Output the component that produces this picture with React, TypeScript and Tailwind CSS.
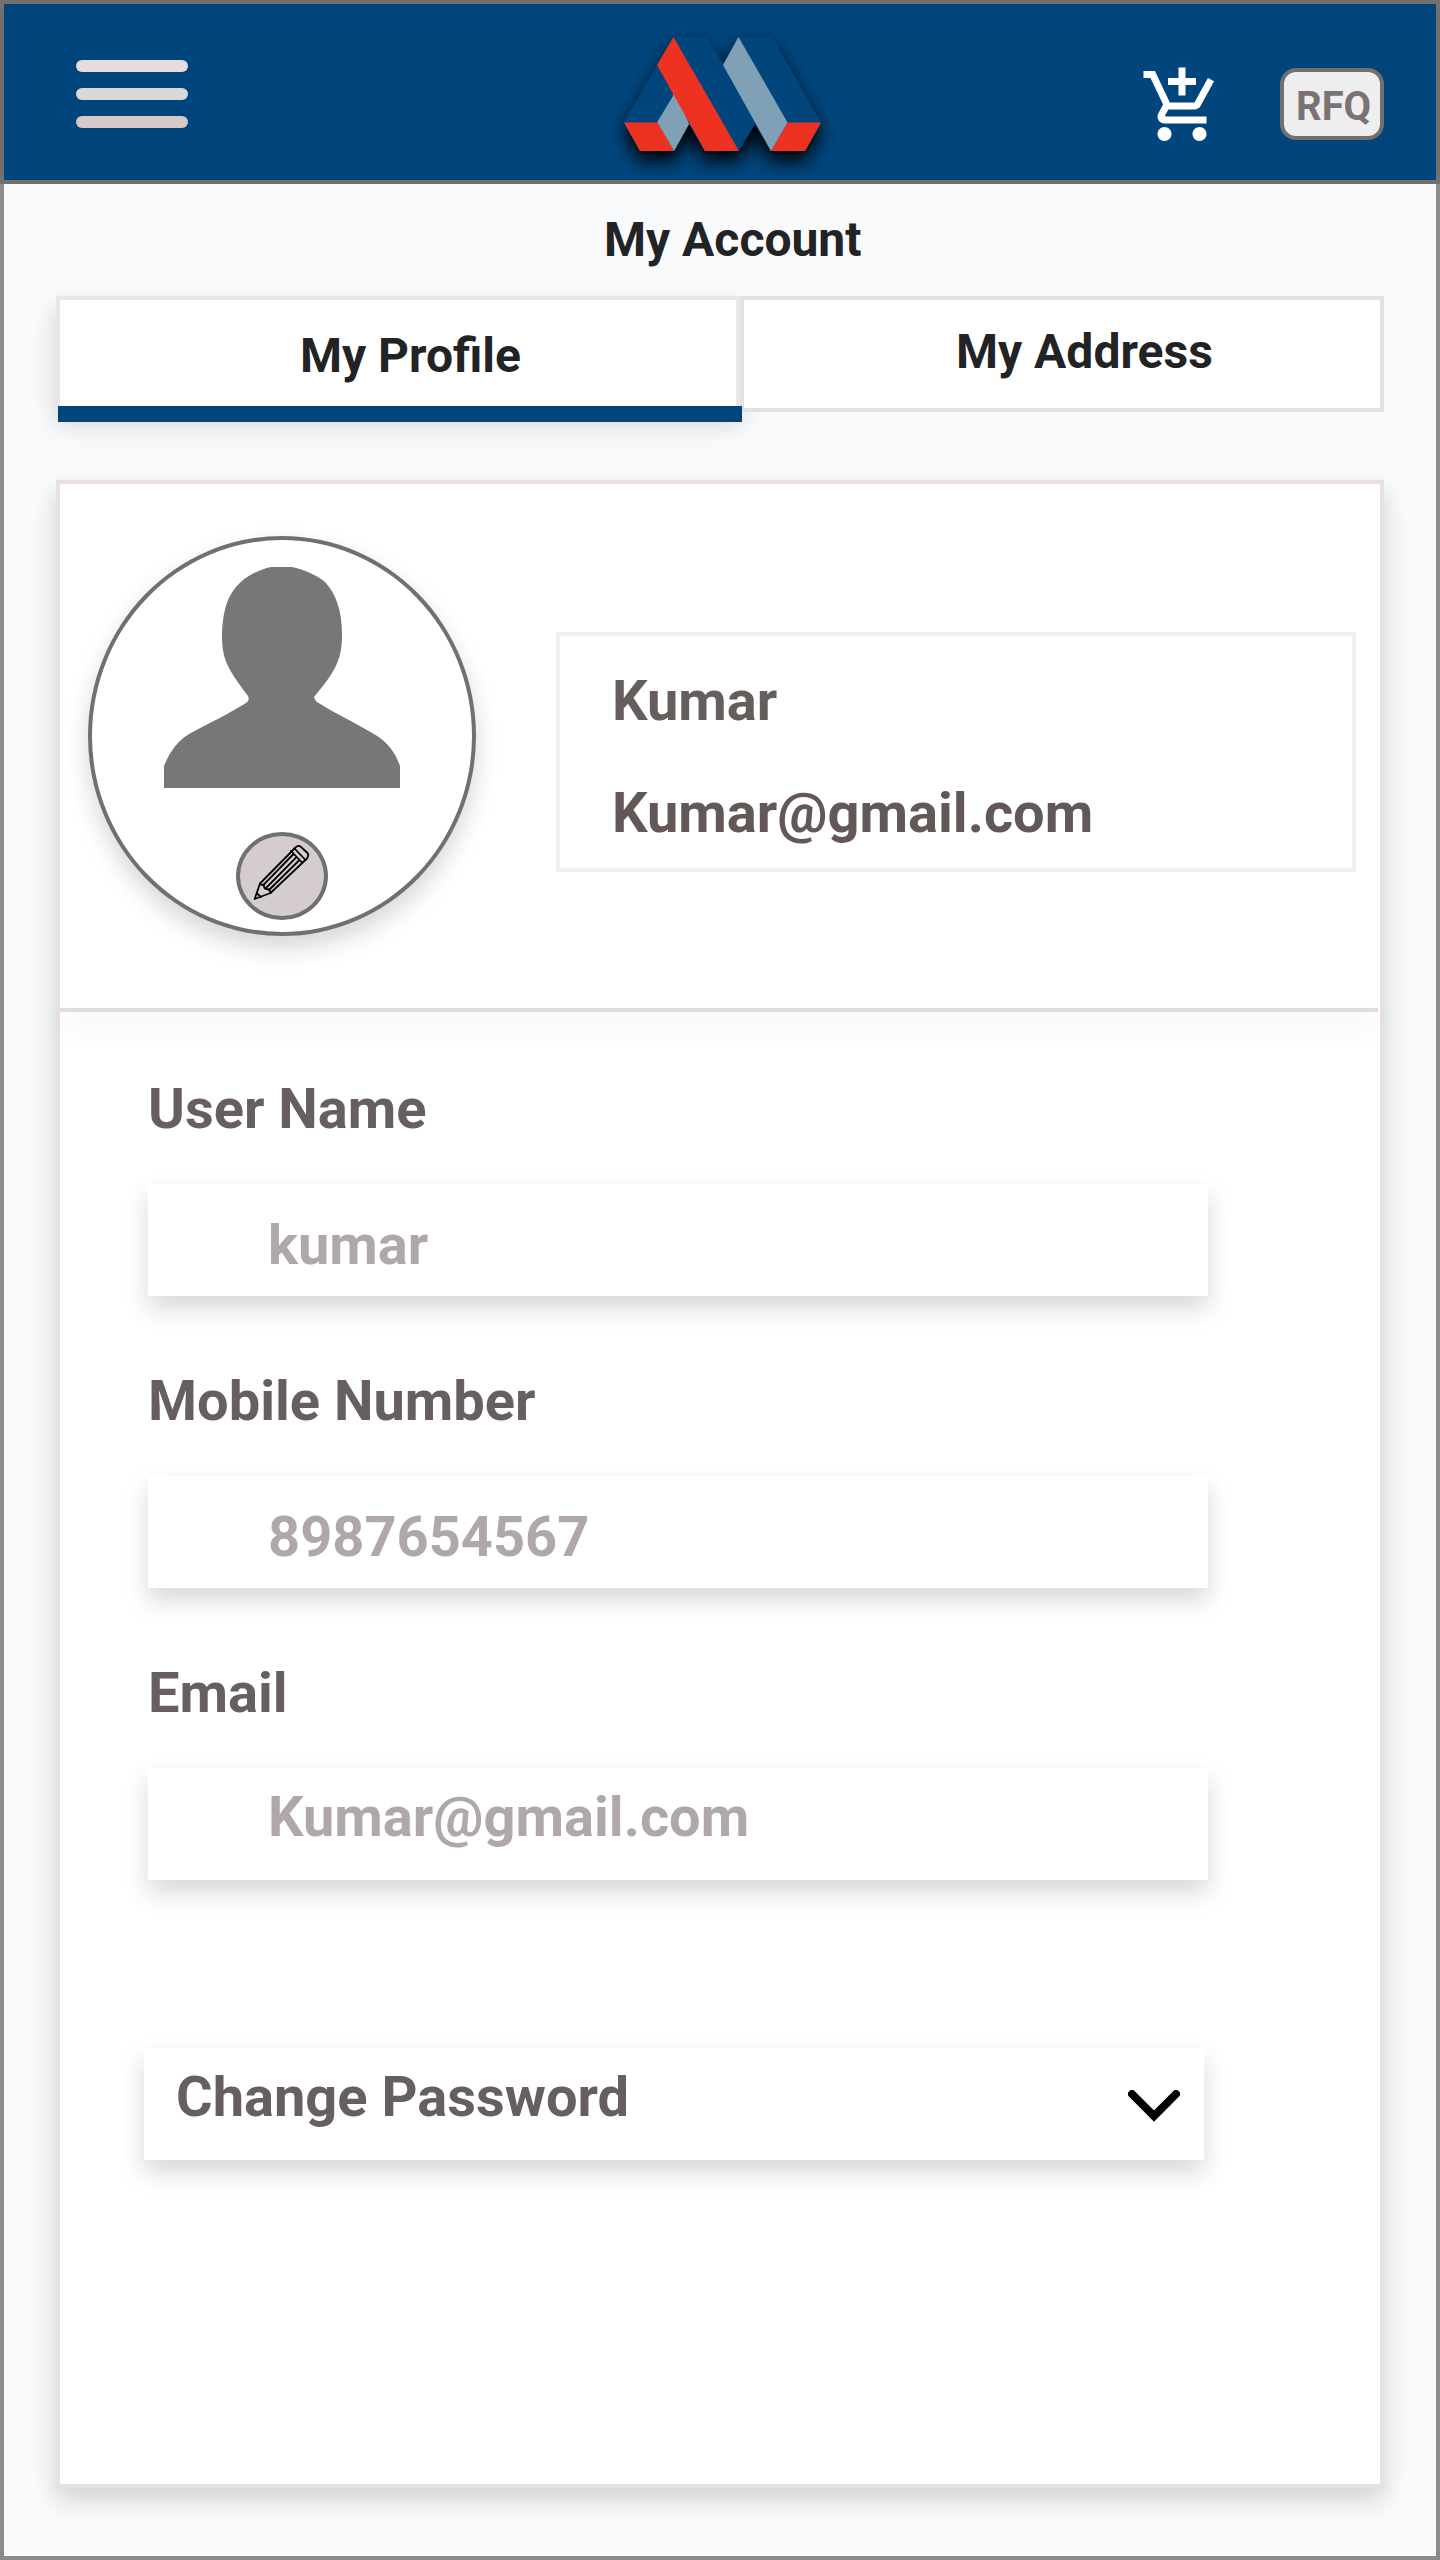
import React from 'react';
import { MdAddShoppingCart } from 'react-icons/md';

const shadow = 'shadow-[0_12px_24px_rgba(0,0,0,0.16)]';

function Logo() {
  return (
    <svg viewBox="0 0 260 166" className="absolute left-[586px] top-[6px] h-[166px] w-[260px] overflow-hidden">
      <defs>
        <filter id="logo-shadow" x="-30%" y="-30%" width="160%" height="170%">
          <feDropShadow dx="0" dy="10" stdDeviation="9" floodColor="#000" floodOpacity="1" />
        </filter>
      </defs>
      <g filter="url(#logo-shadow)">
        <path fill="#00457c" d="M83.500 27H117L133 54L149 27H182L231 112.500L215 141H181L165 114L148.500 141H115L99 114L84 141H50L34 112.500Z" />
        <path fill="#80a1b5" d="M83 76L99 114L84 141L67 112.500L83 86Z" />
        <path fill="#ee3124" d="M34 112.500H67.500L84 141H50ZM83.500 27L149 141H115L67 55ZM197.500 112.500H231L215 141H181Z" />
        <path fill="#80a1b5" d="M148.500 27L197.500 112.500L181 141L133 55Z" />
      </g>
    </svg>
  );
}

function Person() {
  return (
    <svg viewBox="0 0 236 221" className="h-[221px] w-[236px]" fill="#777777">
      <path d="M107 0H128C142 3 154 9 161 15C172 27 178 43 178 68C178 92 172 104 150 130Q151 134 153 135C172 147 190 155 210 167C224 175 232 187 236 199V221H0V199C5 187 12 175 25 167C45 156 63 148 82 136Q86 134 84 129C63 101 58 92 58 68C59 41 64 26 79 13C87 7 97 2 107 0Z" />
    </svg>
  );
}

function Pencil() {
  return (
    <svg viewBox="20 16 84 80" className="h-20 w-[84px]" fill="none" stroke="#000" strokeWidth="1.800" strokeLinejoin="round" strokeLinecap="round">
      <path d="M34.700 79L40 63.500L75.500 27.500Q78.500 24.500 81 27L87 32.500Q89.500 35 87 38.500L50.500 73Z" />
      <path d="M40 63.500Q42 66 44 64.500Q43.500 68.500 46.500 69Q50 69 50.500 73M37 73.500L41 77" />
      <path d="M43.500 64.800L73.500 34M46 68L76.500 37.200M49 70L79.500 40M71 31L82 42.500M74.500 28.500L85.500 40" />
    </svg>
  );
}

function Field({ label, value, valueClass }: { label: string; value: string; valueClass: string }) {
  return (
    <div className="mb-[46px]">
      <div className="h-[134px] pt-[26px] leading-[66px] text-[#675f5f]">{label}</div>
      <div className={`h-28 w-[1060px] bg-white pl-[120px] leading-[66px] text-[#b0a8a8] ${valueClass} ${shadow}`}>{value}</div>
    </div>
  );
}

export default function App() {
  return (
    <div className="flex h-[2560px] w-[1440px] flex-col bg-[#f9fafc] font-['Roboto',sans-serif] font-bold shadow-[inset_0_0_0_4px_#8b8b8b]">
      <header className="relative flex h-[184px] shrink-0 items-start border-4 border-[#707070] bg-[#00457c] pl-[72px]">
        <div className="mt-14 flex w-28 flex-col gap-4">
          <div className="h-3 rounded-full bg-[#e5dcde]" />
          <div className="h-3 rounded-full bg-[#dcd7d7]" />
          <div className="h-3 rounded-full bg-[#d5c9c9]" />
        </div>
        <Logo />
        <MdAddShoppingCart className="ml-auto mt-[60px] h-[84px] w-[84px] text-white" />
        <div className="ml-14 mr-[52px] mt-16 h-[72px] w-[104px] rounded-2xl border-4 border-[#707070] bg-[#eeeeee] pl-3 pt-3 text-[40px] leading-[46px] text-[#7a7373]">
          RFQ
        </div>
      </header>

      <h1 className="mt-[26px] h-[86px] pl-[604px] pt-[2px] text-[48px] leading-[56px] text-[#222325]">My Account</h1>

      <nav className="mx-14 flex h-[184px] shrink-0 items-start text-[48px] leading-[56px] text-[#222325]">
        <div className={`h-[116px] w-[684px] border-4 border-[#e8e6e6] bg-white ${shadow}`}>
          <div className="relative z-20 -ml-0.5 -mr-1.5 h-[122px] border-b-[16px] border-[#00457c] pl-[242px] pt-7">My Profile</div>
        </div>
        <div className="relative z-10 h-[116px] w-[644px] border-4 border-[#e2e0e0] bg-white pl-[212px] pt-6">My Address</div>
      </nav>

      <main className={`mx-14 flex h-[2008px] shrink-0 flex-col border-4 border-[#eae0e0] bg-white text-[56px] ${shadow}`}>
        <section className="flex h-[524px] shrink-0 items-start pl-7">
          <div className={`mt-[52px] flex h-[400px] w-[388px] flex-col items-center rounded-[50%] border-4 border-[#707070] bg-white pt-[27px] ${shadow}`}>
            <Person />
            <div className="mt-11 flex h-[88px] w-[92px] items-center justify-center rounded-[50%] border-4 border-[#707070] bg-[#d5cdcd]">
              <Pencil />
            </div>
          </div>
          <div className="ml-20 mt-[148px] h-60 w-[800px] border-4 border-[#f3f0ef] pl-[52px] pt-8 leading-[66px]">
            <div className="text-[#665e5c]">Kumar</div>
            <div className="mt-[46px] text-[#635857]">Kumar@gmail.com</div>
          </div>
        </section>
        <div className="mr-0.5 h-1 shrink-0 bg-[#e2dddb] shadow-[0_12px_24px_rgba(0,0,0,0.16)]" />
        <section className="pl-[88px] pt-[38px]">
          <Field label="User Name" value="kumar" valueClass="pt-7" />
          <Field label="Mobile Number" value="8987654567" valueClass="pt-7" />
          <Field label="Email" value="Kumar@gmail.com" valueClass="pt-4" />
        </section>
        <button className={`ml-[84px] mt-[122px] flex h-28 w-[1060px] shrink-0 items-start bg-white pl-8 pr-6 pt-4 text-left leading-[66px] text-[#675f5f] ${shadow}`}>
          <span>Change Password</span>
          <svg viewBox="0 0 52 32" className="ml-auto mt-[26px] h-8 w-[52px]" fill="none" stroke="#000" strokeWidth="8" strokeLinecap="round">
            <path d="M4 4L26 26L48 4" />
          </svg>
        </button>
      </main>
    </div>
  );
}
